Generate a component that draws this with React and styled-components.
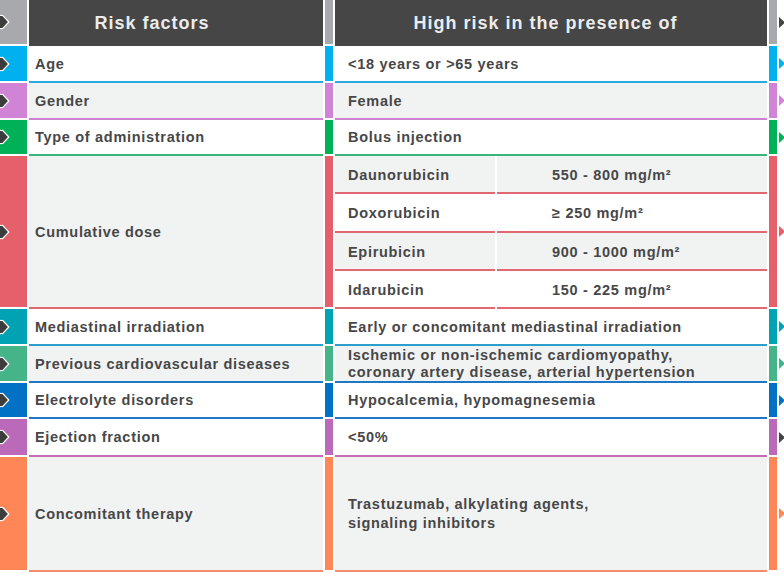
import styled, { createGlobalStyle } from "styled-components";

const Global = createGlobalStyle`
  html, body {
    margin: 0;
    padding: 0;
    background: #ffffff;
  }
  body {
    font-family: "Liberation Sans", Arial, sans-serif;
    color: #474747;
  }
`

const Table = styled.div`
  width: 784px;
  display: flex;
  flex-direction: column;
  overflow: hidden;
`

const Row = styled.div`
  display: grid;
  grid-template-columns: 27px 294px 8px 432px 8px 1fr;
  column-gap: 2px;
  height: ${p => p.h}px;
`

const Strip = styled.div`
  position: relative;
  background: ${p => p.color};
  margin-bottom: 2px;
`

const Cell = styled.div`
  background: ${p => p.bg || "#ffffff"};
  border-bottom: ${p => (p.line ? `2px solid ${p.line}` : "none")};
  display: flex;
  align-items: center;
  padding-left: ${p => p.pad || 6}px;
  font-weight: 700;
  font-size: 14.5px;
  letter-spacing: 0.7px;
  line-height: 18px;
`

const HeadCell = styled.div`
  background: #464646;
  display: flex;
  align-items: center;
  justify-content: center;
  padding-right: ${p => p.shift || 0}px;
  color: #ececec;
  font-weight: 700;
  font-size: 18px;
  letter-spacing: 1px;
`

const SubTable = styled.div`
  display: grid;
  grid-template-columns: 160px 1fr;
  grid-auto-rows: 1fr;
  column-gap: 2px;
`

const SubCell = styled.div`
  background: ${p => (p.shade ? "#f1f2f2" : "#ffffff")};
  border-bottom: 2px solid #e16873;
  display: flex;
  align-items: center;
  padding-left: ${p => p.pad}px;
  padding-top: 2px;
  font-weight: 700;
  font-size: 14.5px;
  letter-spacing: 0.7px;
`

const ArrowSlot = styled.div`
  display: flex;
  align-items: center;
  padding-bottom: 2px;
`

const LeftMark = styled.svg`
  position: absolute;
  left: 0;
  top: 50%;
  transform: translateY(-50%);
`

function LeftArrow() {
  return (
    <LeftMark width="10" height="15" viewBox="0 0 10 15">
      <polygon points="-2,0.8 2.6,0.8 8.8,7.5 2.6,14.2 -2,14.2" fill="#3c3c3c" stroke="#ffffff" strokeWidth="1.3" />
    </LeftMark>
  )
}

function RightArrow({ color }) {
  return (
    <svg width="6" height="11" viewBox="0 0 6 11">
      <polygon points="0,0 6,5.5 0,11" fill={color} />
    </svg>
  )
}

const GRAY = "#f1f2f2"

const rows = [
  { label: "Age", value: "<18 years or >65 years", color: "#00b0ef", line: "#2aa9e0", bg: "#ffffff", h: 37 },
  { label: "Gender", value: "Female", color: "#d184d6", line: "#cf80d2", bg: GRAY, h: 37 },
  { label: "Type of administration", value: "Bolus injection", color: "#00b158", line: "#3cb37d", bg: "#ffffff", h: 36 },
  { label: "Cumulative dose", sub: true, color: "#e5606a", line: "#e16873", bg: GRAY, h: 153 },
  { label: "Mediastinal irradiation", value: "Early or concomitant mediastinal irradiation", color: "#00a2b3", line: "#2b9fcb", bg: "#ffffff", h: 37 },
  { label: "Previous cardiovascular diseases", value: ["Ischemic or non-ischemic cardiomyopathy,", "coronary artery disease, arterial hypertension"], color: "#45b488", line: "#1f78c6", bg: GRAY, h: 37, lh: 17 },
  { label: "Electrolyte disorders", value: "Hypocalcemia, hypomagnesemia", color: "#0071c5", line: "#1f78c6", bg: "#ffffff", h: 36 },
  { label: "Ejection fraction", value: "<50%", color: "#bb69b9", line: "#c86bb6", bg: "#ffffff", h: 38, arrow: "#444444" },
  { label: "Concomitant therapy", value: ["Trastuzumab, alkylating agents,", "signaling inhibitors"], color: "#ff8657", line: "#f48d69", bg: GRAY, h: 115, lh: 19 },
]

const doses = [
  ["Daunorubicin", "550 - 800 mg/m²"],
  ["Doxorubicin", "≥ 250 mg/m²"],
  ["Epirubicin", "900 - 1000 mg/m²"],
  ["Idarubicin", "150 - 225 mg/m²"],
]

function Value({ value, lh }) {
  if (Array.isArray(value)) {
    return (
      <div style={lh ? { lineHeight: `${lh}px` } : undefined}>
        {value.map(v => <div key={v}>{v}</div>)}
      </div>
    )
  }
  return <span>{value}</span>
}

export default function App() {
  return (
    <Table>
      <Global />
      <Row h={46}>
        <Strip color="#a7a9ac"><LeftArrow /></Strip>
        <HeadCell shift={48}>Risk factors</HeadCell>
        <Strip color="#a7a9ac" />
        <HeadCell shift={11}>High risk in the presence of</HeadCell>
        <Strip color="#a7a9ac" />
        <ArrowSlot><RightArrow color="#444444" /></ArrowSlot>
      </Row>
      {rows.map(r => (
        <Row h={r.h} key={r.label}>
          <Strip color={r.color}><LeftArrow /></Strip>
          <Cell bg={r.bg} line={r.line}>{r.label}</Cell>
          <Strip color={r.color} />
          {r.sub ? (
            <SubTable>
              {doses.map(([drug, dose], i) => [
                <SubCell key={drug} shade={i % 2 === 0} pad={13}>{drug}</SubCell>,
                <SubCell key={dose} shade={i % 2 === 0} pad={55}>{dose}</SubCell>,
              ])}
            </SubTable>
          ) : (
            <Cell bg={r.bg} line={r.line} pad={13}>
              <Value value={r.value} lh={r.lh} />
            </Cell>
          )}
          <Strip color={r.color} />
          <ArrowSlot><RightArrow color={r.arrow || r.color} /></ArrowSlot>
        </Row>
      ))}
    </Table>
  )
}
